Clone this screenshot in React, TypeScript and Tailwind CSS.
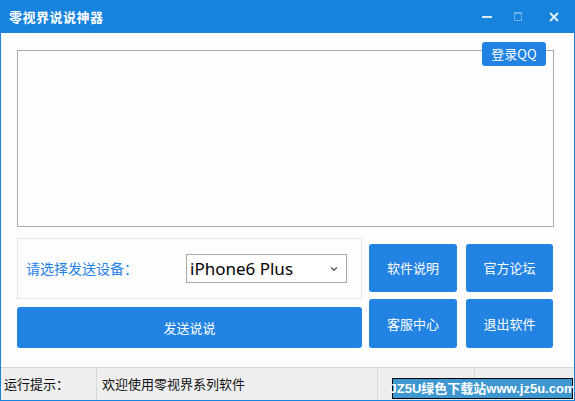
import { ChevronDown } from "lucide-react";

const cjk = { fontFamily: '"Noto Sans CJK SC", "Noto Sans", sans-serif' };

const actions = ["软件说明", "官方论坛", "客服中心", "退出软件"];

export default function App() {
  return (
    <div
      className="relative w-[575px] h-[401px] flex flex-col bg-[#fdfdfd] border-x border-b border-[#1683dc] overflow-hidden"
      style={cjk}
    >
      {/* Title bar */}
      <div className="h-[33px] shrink-0 -mx-px bg-[#1683dc] flex items-center pl-[9px] pr-[16px]">
        <span className="text-white text-[13px] font-bold tracking-[0.5px]">零视界说说神器</span>
        <div className="ml-auto flex items-center">
          <div className="w-[10px] h-[2px] bg-[#dbeaf8] mr-[22px]" />
          <div className="w-[8px] h-[9px] border border-[#6fb0ea] border-t-2 mr-[27px]" />
          <svg width="10" height="10" viewBox="0 0 10 10">
            <path d="M1 1 L9 9 M9 1 L1 9" stroke="#e6f1fb" strokeWidth="1.8" />
          </svg>
        </div>
      </div>

      {/* Main */}
      <div className="relative flex-1 pl-[16px] pr-[20px] pt-[17px]">
        <div className="h-[177px] border border-[#a9a9ae] bg-[#fdfdfd]" />
        <button className="absolute left-[481px] top-[9px] w-[64px] h-[24px] rounded-[3px] bg-[#2182e3] text-white text-[13px] flex items-center justify-center">
          登录QQ
        </button>

        <div className="mt-[11px] flex items-start gap-[7px]">
          <div className="w-[345px] flex flex-col gap-[8px]">
            <div className="h-[61px] border border-[#e6e6e6] flex items-center pl-[8px]">
              <span className="text-[#1f80e6] text-[14px] w-[160px]">请选择发送设备：</span>
              <div className="w-[161px] h-[29px] border border-[#a8a8a8] bg-white flex items-center pl-[3px] pr-[7px]">
                <span className="text-[17px] text-black" style={{ fontFamily: '"Noto Sans", sans-serif' }}>
                  iPhone6 Plus
                </span>
                <ChevronDown className="ml-auto w-[10px] h-[10px] text-[#555]" strokeWidth={3} />
              </div>
            </div>
            <button className="h-[41px] rounded-[3px] bg-[#2383e3] text-white text-[13px] flex items-center justify-center">
              发送说说
            </button>
          </div>

          <div className="mt-[6px] grid grid-cols-[88px_87px] grid-rows-[48px_49px] gap-x-[9px] gap-y-[7px]">
            {actions.map((a) => (
              <button
                key={a}
                className="rounded-[3px] bg-[#2383e3] text-white text-[13px] flex items-center justify-center"
              >
                {a}
              </button>
            ))}
          </div>
        </div>
      </div>

      {/* Status bar */}
      <div className="h-[33px] shrink-0 bg-[#eeeeee] border-t border-[#d6d6d6] flex text-[13px] text-[#111]">
        <div className="w-[96px] border-r border-[#d9d9d9] flex items-center pl-[3px]">运行提示：</div>
        <div className="w-[281px] border-r border-[#d9d9d9] flex items-center pl-[5px]">欢迎使用零视界系列软件</div>
        <div className="w-[97px] border-r border-[#d9d9d9] flex items-center justify-center text-[#555]">1.1.0</div>
        <div className="flex-1 flex items-center justify-center text-[#1f80e6]">零视界出品</div>
      </div>

      {/* Watermark */}
      <div
        className="absolute left-[391px] top-[378px] w-[181px] h-[21px] bg-[#3e98cf] border border-black flex items-center justify-center text-white text-[13px] font-bold whitespace-nowrap leading-none"
        style={{ fontFamily: '"Liberation Sans", "Noto Sans CJK SC", sans-serif' }}
      >
        JZ5U绿色下载站www.jz5u.com
      </div>
    </div>
  );
}
